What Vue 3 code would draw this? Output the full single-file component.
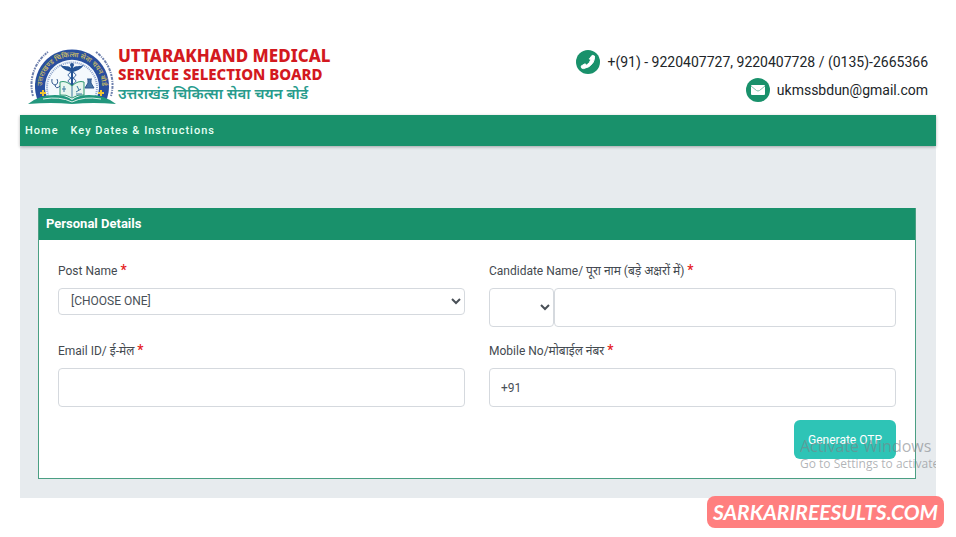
<script setup>
import { ref } from 'vue'

const postName = ref('')
const title = ref('')
const candidateName = ref('')
const email = ref('')
const mobile = ref('+91')

const posts = ['Nursing Officer', 'Medical Officer', 'Technician']
const titles = ['Mr.', 'Mrs.', 'Ms.']
</script>

<template>
  <div class="page">
    <header class="header">
      <a class="brand" href="#">
        <svg class="logo" viewBox="0 0 88 60" role="img" aria-label="Board emblem">
          <defs>
            <path id="arc-band" d="M17 55 A30 30 0 1 1 71 55" />
          </defs>
          <path d="M10 56 A37 37 0 1 1 78 56 Z" fill="#294f9e" />
          <path d="M21 56 A27 27 0 1 1 67 56 Z" fill="#f4f9fd" />
          <path d="M23 56 A25 25 0 1 1 65 56" fill="none" stroke="#8ba2cb" stroke-width="2" stroke-dasharray="1 1" />
          <text class="ring-gold"><textPath href="#arc-band" startOffset="50%" text-anchor="middle">उत्तराखण्ड चिकित्सा सेवा चयन बोर्ड</textPath></text>
          <path d="M5 51 A41 41 0 0 1 20 7" fill="none" stroke="#6f81ae" stroke-width="2" stroke-dasharray="2 1 3 1 1 1" />
          <path d="M68 7 A41 41 0 0 1 83 51" fill="none" stroke="#6f81ae" stroke-width="2" stroke-dasharray="2 1 3 1 1 1" />
          <path d="M43 20 H45 V52 H43 Z" fill="#245394" />
          <circle cx="44" cy="20" r="2" fill="#245394" />
          <path d="M43 27 C39 26 35 24 32 20 C37 22 40 20 43 23 Z M45 27 C49 26 53 24 56 20 C51 22 48 20 45 23 Z" fill="#245394" />
          <path d="M44 27 C38 29 40 32 44 33 C50 35 48 38 44 39 C40 41 41 43 44 44 M44 27 C50 29 48 32 44 33 C38 35 40 38 44 39 C48 41 47 43 44 44" fill="none" stroke="#245394" stroke-width="1" />
          <path d="M44 41 Q38 35 32 37 V50 Q38 49 44 53 Q50 49 56 50 V37 Q50 35 44 41 Z" fill="#e9f6ef" stroke="#2d986f" />
          <path d="M44 41 V52 M36 41 V47 M34 44 H38 M48 47 L53 44 M49 41 L51 45 M48 49 H54" fill="none" stroke="#3b78a0" stroke-width="1" />
          <path d="M24 34 Q23 39 27 40 Q31 39 29 34 M27 40 Q28 45 32 41" fill="none" stroke="#31588e" stroke-width="1" />
          <path d="M59 34 H64 M60 34 V38 L57 43 H66 L63 38 V34" fill="#4776a7" stroke="#31588e" />
          <path d="M15 45 V51 M12 48 H18 M73 45 V51 M70 48 H76" stroke="#f0c531" stroke-width="2" />
          <path d="M0 59 Q11 50 27 50 Q38 50 44 55 Q50 50 61 50 Q77 50 88 59 Q65 57 44 59 Q23 57 0 59 Z" fill="#22977d" />
          <path d="M15 54 Q32 51 44 57 Q56 51 73 54" fill="none" stroke="#dff3eb" stroke-width="1" />
        </svg>
        <span class="brand-text">
          <span class="brand-first">UTTARAKHAND MEDICAL</span>
          <span class="brand-second">SERVICE SELECTION BOARD</span>
          <span class="brand-hindi" lang="hi">उत्तराखंड चिकित्सा सेवा चयन बोर्ड</span>
        </span>
      </a>
      <address class="contacts">
        <span class="contact">
          <svg viewBox="0 0 24 24" aria-hidden="true">
            <circle cx="12" cy="12" r="12" fill="#19916b" />
            <path d="M16.2 5.3 L18.5 6.1 Q19 9.5 16.8 13 Q13.7 17.6 7.6 18.6 Q6.3 18.7 5.5 17.9 L5.2 16 L9 13.8 L10.6 15 Q13.8 13.2 14.6 10.1 L13.4 8.8 Z" fill="#fff" stroke="#fff" stroke-linejoin="round" />
          </svg>
          +(91) - 9220407727, 9220407728 / (0135)-2665366
        </span>
        <span class="contact">
          <svg viewBox="0 0 24 24" aria-hidden="true">
            <circle cx="12" cy="12" r="12" fill="#19916b" />
            <rect x="5" y="7" width="14" height="10" rx="1" fill="#fff" />
            <path d="M5 8 L10.5 12.5 Q12 13.5 13.5 12.5 L19 8" fill="none" stroke="#7fc3ac" />
          </svg>
          ukmssbdun@gmail.com
        </span>
      </address>
    </header>

    <nav class="nav">
      <a href="#">Home</a>
      <a href="#">Key Dates &amp; Instructions</a>
    </nav>

    <main class="content">
      <form class="card" @submit.prevent>
        <h2>Personal Details</h2>
        <div class="fields">
          <div class="field">
            <label for="post">Post Name <b>*</b></label>
            <select id="post" v-model="postName" class="control short">
              <option value="">[CHOOSE ONE]</option>
              <option v-for="post in posts" :key="post">{{ post }}</option>
            </select>
          </div>
          <div class="field">
            <label for="candidate">Candidate Name/ पूरा नाम (बड़े अक्षरों में) <b>*</b></label>
            <div class="name-row">
              <select v-model="title" class="control title" aria-label="Title">
                <option value=""></option>
                <option v-for="item in titles" :key="item">{{ item }}</option>
              </select>
              <input id="candidate" v-model="candidateName" class="control" type="text" />
            </div>
          </div>
          <div class="field">
            <label for="email">Email ID/ ई-मेल <b>*</b></label>
            <input id="email" v-model="email" class="control" type="email" />
          </div>
          <div class="field">
            <label for="mobile">Mobile No/मोबाईल नंबर <b>*</b></label>
            <input id="mobile" v-model="mobile" class="control" type="tel" />
          </div>
        </div>
        <div class="actions">
          <button type="submit">Generate OTP</button>
        </div>
      </form>
      <div class="activation">
        <span class="activation-title">Activate Windows</span>
        <span>Go to Settings to activate</span>
      </div>
    </main>
    <div class="site-tag">SARKARIREESULTS.COM</div>
  </div>
</template>

<style>
body {
  margin: 0;
  background: #ffffff;
}
</style>

<style scoped>
.page {
  position: relative;
  padding: 0 20px 39px;
  font-family: Roboto, "Noto Sans", "Liberation Sans", sans-serif;
  font-size: 12px;
  color: #444a50;
}

.page * {
  box-sizing: border-box;
}

.header {
  display: flex;
  align-items: flex-start;
  justify-content: space-between;
  height: 115px;
  padding: 45px 8px 0;
}

.brand {
  display: flex;
  gap: 2px;
  text-decoration: none;
}

.logo {
  width: 88px;
  height: 60px;
}

.ring-gold {
  font-size: 7px;
  font-weight: 600;
  fill: #c5b96a;
}

.brand-text {
  display: flex;
  flex-direction: column;
  padding-top: 1px;
  font-family: "Noto Sans", "Open Sans", sans-serif;
  font-weight: 800;
  line-height: 19px;
  white-space: nowrap;
  color: #d31920;
}

.brand-first {
  font-size: 17px;
}

.brand-second {
  font-size: 15px;
}

.brand-hindi {
  font-size: 15px;
  font-weight: 600;
  color: #279b8c;
}

.contacts {
  display: flex;
  flex-direction: column;
  align-items: flex-end;
  gap: 4px;
  padding-top: 5px;
  font-size: 14px;
  font-style: normal;
  line-height: 24px;
  color: #212529;
}

.contact {
  display: flex;
  gap: 7px;
}

.contact svg {
  width: 24px;
  height: 24px;
}

.nav {
  position: relative;
  z-index: 1;
  display: flex;
  gap: 12px;
  padding: 0 5px;
  background: #19916b;
  box-shadow: 0 1px 3px rgba(0, 0, 0, .3);
  font-size: 11px;
  font-weight: 500;
  line-height: 32px;
  height: 31px;
  letter-spacing: 1px;
}

.nav a {
  color: #e5fff4;
  text-decoration: none;
}

.content {
  position: relative;
  padding: 62px 20px 19px 18px;
  background: #e7ebee;
}

.card {
  border: 1px solid #4b9f83;
  border-top: 0;
  background: #ffffff;
}

h2 {
  margin: 0;
  padding: 0 7px;
  background: #19916b;
  color: #ffffff;
  font-size: 13px;
  font-weight: 700;
  line-height: 32px;
}

.fields {
  display: grid;
  grid-template-columns: 1fr 1fr;
  column-gap: 24px;
  row-gap: 13px;
  padding: 20px 19px 0;
}

.field {
  display: flex;
  flex-direction: column;
  gap: 8px;
}

label {
  height: 20px;
  line-height: 20px;
  white-space: nowrap;
}

label b {
  color: #e51c23;
  font-size: 14px;
  font-weight: 500;
}

.control {
  width: 100%;
  height: 39px;
  border: 1px solid #d5d9de;
  border-radius: 4px;
  background: #ffffff;
  padding: 0 11px;
  color: #495057;
  font: inherit;
}

.short {
  height: 27px;
  padding: 0 0 2px 8px;
}

.name-row {
  display: flex;
}

.title {
  flex: 0 0 65px;
  padding: 0;
}

.actions {
  display: flex;
  justify-content: flex-end;
  padding: 13px 19px 19px;
}

.actions button {
  height: 39px;
  border: 0;
  border-radius: 6px;
  background: #2ec4b6;
  color: #ffffff;
  padding: 0 14px;
  font: inherit;
  cursor: pointer;
}

.activation {
  position: absolute;
  right: 0;
  bottom: 25px;
  display: flex;
  flex-direction: column;
  width: 136px;
  overflow: hidden;
  color: rgba(125, 130, 135, .6);
  font-family: "Open Sans", sans-serif;
  font-size: 12px;
  line-height: 18px;
  white-space: nowrap;
  pointer-events: none;
}

.activation-title {
  font-size: 16px;
}

.site-tag {
  position: absolute;
  right: 12px;
  bottom: 9px;
  border-radius: 8px;
  background: #ff7f7f;
  color: #ffffff;
  padding: 0 6px;
  font-family: Lato, sans-serif;
  font-size: 21px;
  font-style: italic;
  font-weight: 700;
  line-height: 32px;
}
</style>
